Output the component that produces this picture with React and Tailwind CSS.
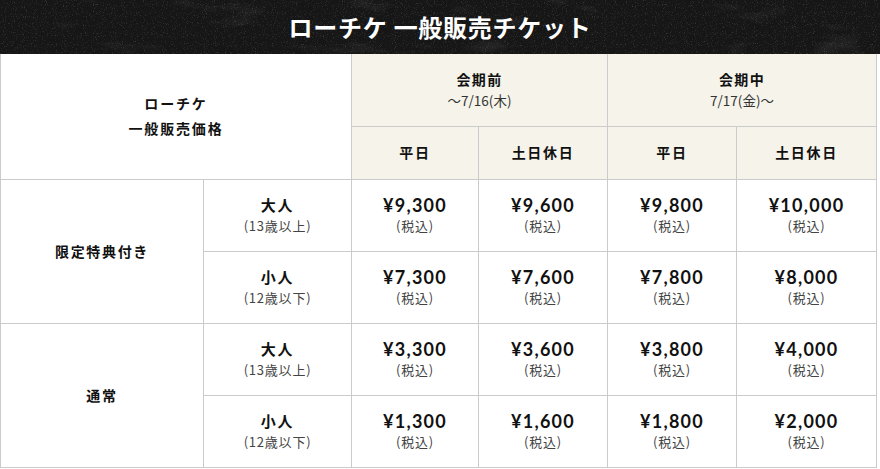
import React from "react";

const jp = { fontFamily: '"Noto Sans CJK JP", "Noto Sans", sans-serif' };

const rows = [
  {
    group: "限定特典付き",
    items: [
      { who: "大人", age: "(13歳以上)", prices: ["¥9,300", "¥9,600", "¥9,800", "¥10,000"] },
      { who: "小人", age: "(12歳以下)", prices: ["¥7,300", "¥7,600", "¥7,800", "¥8,000"] },
    ],
  },
  {
    group: "通常",
    items: [
      { who: "大人", age: "(13歳以上)", prices: ["¥3,300", "¥3,600", "¥3,800", "¥4,000"] },
      { who: "小人", age: "(12歳以下)", prices: ["¥1,300", "¥1,600", "¥1,800", "¥2,000"] },
    ],
  },
];

function Texture() {
  return (
    <svg className="absolute inset-0 h-full w-full" preserveAspectRatio="none">
      <filter id="grain">
        <feTurbulence type="fractalNoise" baseFrequency="0.9" numOctaves="2" seed="4" />
        <feColorMatrix values="0 0 0 0 1  0 0 0 0 1  0 0 0 0 1  0 0 0 1.6 -0.9" />
      </filter>
      <filter id="blot">
        <feTurbulence type="fractalNoise" baseFrequency="0.015 0.05" numOctaves="3" seed="9" />
        <feColorMatrix values="0 0 0 0 1  0 0 0 0 1  0 0 0 0 1  0 0 0 1.3 -0.8" />
      </filter>
      <rect width="100%" height="100%" filter="url(#blot)" opacity="0.2" />
      <rect width="100%" height="100%" filter="url(#grain)" opacity="0.32" />
    </svg>
  );
}

export default function App() {
  const cell = "border border-[#cbcbcb] text-center align-middle";
  const head = `${cell} bg-[#f5f3ea]`;
  const sub = "text-[13px] leading-[20px] text-[#444] tracking-[0.06em]";
  return (
    <div className="w-[880px] h-[469px] bg-white overflow-hidden" style={jp}>
      <div className="relative h-[54px] bg-[#161616] flex items-center justify-center overflow-hidden">
        <Texture />
        <h1 className="relative text-white text-[24px] font-bold tracking-[0.03em] leading-none">
          ローチケ 一般販売チケット
        </h1>
      </div>
      <table className="w-[876px] border-collapse table-fixed text-[#111]">
        <colgroup>
          <col className="w-[203px]" />
          <col className="w-[148px]" />
          <col className="w-[127px]" />
          <col className="w-[129px]" />
          <col className="w-[129px]" />
          <col className="w-[140px]" />
        </colgroup>
        <thead>
          <tr className="h-[72px]">
            <th colSpan={2} rowSpan={2} className={`${cell} border-t-0 bg-white text-[14px] font-bold leading-[25px] tracking-[0.13em]`}>
              ローチケ
              <br />
              一般販売価格
            </th>
            <th colSpan={2} className={`${head} border-t-0`}>
              <div className="text-[14px] font-bold leading-[21px] tracking-[0.1em]">会期前</div>
              <div className="text-[13.5px] font-normal leading-[20px] text-[#333]">〜7/16(木)</div>
            </th>
            <th colSpan={2} className={`${head} border-t-0`}>
              <div className="text-[14px] font-bold leading-[21px] tracking-[0.1em]">会期中</div>
              <div className="text-[13.5px] font-normal leading-[20px] text-[#333]">7/17(金)〜</div>
            </th>
          </tr>
          <tr className="h-[53px]">
            {["平日", "土日休日", "平日", "土日休日"].map((t, i) => (
              <th key={i} className={`${head} text-[14px] font-bold tracking-[0.12em]`}>
                {t}
              </th>
            ))}
          </tr>
        </thead>
        <tbody>
          {rows.map((g) =>
            g.items.map((it, j) => (
              <tr key={g.group + j} className="h-[72px]">
                {j === 0 && (
                  <td rowSpan={2} className={`${cell} text-[14px] font-bold tracking-[0.12em]`}>
                    {g.group}
                  </td>
                )}
                <td className={cell}>
                  <div className="text-[15px] font-bold leading-[22px] tracking-[0.12em]">{it.who}</div>
                  <div className={sub}>{it.age}</div>
                </td>
                {it.prices.map((p, k) => (
                  <td key={k} className={cell}>
                    <div
                      className="text-[18px] font-bold leading-[22px] tracking-[0.07em]"
                      style={{ fontFamily: 'Lato, "Noto Sans CJK JP", sans-serif' }}
                    >
                      {p}
                    </div>
                    <div className={sub}>(税込)</div>
                  </td>
                ))}
              </tr>
            ))
          )}
        </tbody>
      </table>
    </div>
  );
}
